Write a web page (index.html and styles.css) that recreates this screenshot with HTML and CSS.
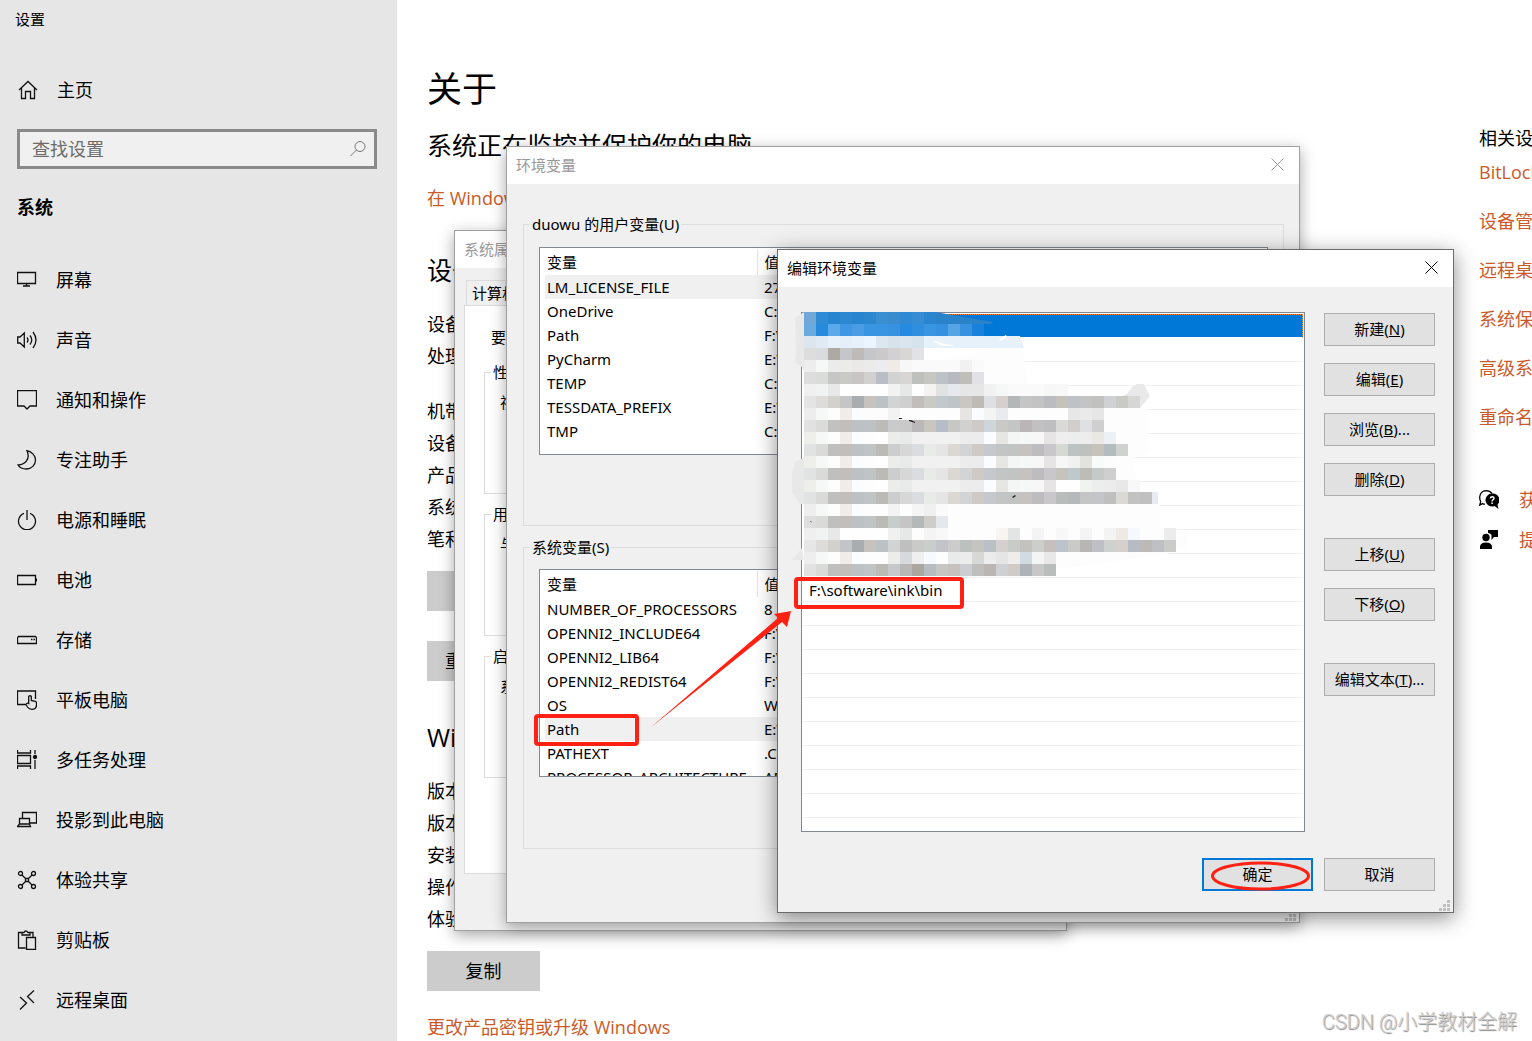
FILE: index.html
```html
<!DOCTYPE html>
<html lang="zh-CN">
<head>
  <meta charset="UTF-8">
  <meta name="viewport" content="width=device-width, initial-scale=1.0">
  <title>设置</title>
  <link rel="stylesheet" href="styles.css">
</head>
<body>
  <div class="settings">
    <aside class="sidebar">
      <div class="app-title">设置</div>
      <a class="home" href="#">
        <svg class="icon" viewBox="0 0 20 20"><path d="M1 10 10 1.5 19 10M3.500 8v10.500h4v-7h5v7h4V8"/></svg>
        主页
      </a>
      <div class="search">
        <input type="text" placeholder="查找设置" aria-label="查找设置">
        <svg class="search-icon" viewBox="0 0 16 16"><circle cx="10" cy="5.500" r="5"/><path d="M6.500 9 .5 15"/></svg>
      </div>
      <h2>系统</h2>
      <nav>
        <a href="#"><svg class="icon" viewBox="0 0 20 20"><path d="M.5 2.500h18v11H.5zM9.500 13.500V16M6 16h7"/></svg>屏幕</a>
        <a href="#"><svg class="icon" viewBox="0 0 20 20"><path d="M.7 7v6H3l4.300 4V3L3 7zM10 7.500q2 2.500 0 5M13 5.500q3.500 4.500 0 9M16 2q6 8 0 16"/></svg>声音</a>
        <a href="#"><svg class="icon" viewBox="0 0 20 20"><path d="M.5.500h19v15.500h-6.500L10 19l-3-3H.5z"/></svg>通知和操作</a>
        <a href="#"><svg class="icon" viewBox="0 0 20 20"><path d="M10 .7c5 1 8.500 5 8.500 9.300 0 5-4 9-9 9-4 0-7-1.500-8.500-4C8.500 14.500 13.500 8.500 10 .7z"/></svg>专注助手</a>
        <a href="#"><svg class="icon" viewBox="0 0 20 20"><path d="M10 0v10M7 3.300a8.500 8.500 0 1 0 6 0"/></svg>电源和睡眠</a>
        <a href="#"><svg class="icon" viewBox="0 0 20 20"><path d="M.5 5.500h18v9H.5zM19.500 8.500v3"/></svg>电池</a>
        <a href="#"><svg class="icon" viewBox="0 0 20 20"><path d="M1.500 6.500h17l1 1.500v5.500H.5V8zM14 9.500h1.500M16.500 9.500H18"/></svg>存储</a>
        <a href="#"><svg class="icon" viewBox="0 0 20 20"><path d="M9 14.500H.5V1h18v8M11.700 13.500V6.500q1.300-1.800 2.600 0v4l4 .8q1.200.3 1.200 1.700v2q0 4.300-4.500 4.300-3 0-4.500-2.300L9 14.500q1-2 2.700-1z"/></svg>平板电脑</a>
        <a href="#"><svg class="icon" viewBox="0 0 20 20"><path d="M.5 0v3h13V0M.5 5.500h13v8H.5zM.5 19v-3h13v3M18 0v4M18 10v9"/><circle class="solid" cx="18" cy="7" r="1.500"/></svg>多任务处理</a>
        <a href="#"><svg class="icon" viewBox="0 0 20 20"><path d="M5.500 8V2.500h14v10.500h-6.500M2.500 14V8.500h10V14M2.500 14 .5 16.500h13L12.500 14z"/></svg>投影到此电脑</a>
        <a href="#"><svg class="icon" viewBox="0 0 20 20"><path d="m5 5 3.500 3.500M15 5l-3.500 3.500M5 15l3.500-3.500M15 15l-3.500-3.500M8.500 8.500h3v3h-3z"/><circle cx="3.500" cy="3.500" r="2"/><circle cx="16.500" cy="3.500" r="2"/><circle cx="3.500" cy="16.500" r="2"/><circle cx="16.500" cy="16.500" r="2"/></svg>体验共享</a>
        <a href="#"><svg class="icon" viewBox="0 0 20 20"><path d="M8.500 18H1.500V2.500H5M13 2.500h3V7M5 5V2.500h2Q8.500-.5 11 2.500h2V5zM9.500 7.500h9v12h-9z"/></svg>剪贴板</a>
        <a href="#"><svg class="icon" viewBox="0 0 20 20"><path d="m3 7 6.500 6L3 19.500M17 .5l-6.500 6 6.500 6.500"/></svg>远程桌面</a>
      </nav>
    </aside>

    <main class="about">
      <h1>关于</h1>
      <p class="status">系统正在监控并保护你的电脑。</p>
      <a class="link security-link" href="#">在 Windows 安全中心中查看详细信息</a>
      <h2>设备规格</h2>
      <ul class="specs">
        <li>设备名称</li>
        <li>处理器</li>
      </ul>
      <ul class="specs more">
        <li>机带 RAM</li>
        <li>设备 ID</li>
        <li>产品 ID</li>
        <li>系统类型</li>
        <li>笔和触控</li>
      </ul>
      <button class="flat">复制</button>
      <button class="flat rename">重命名这台电脑</button>
      <h2>Windows 规格</h2>
      <ul class="specs">
        <li>版本</li>
        <li>版本号</li>
        <li>安装日期</li>
        <li>操作系统</li>
        <li>体验</li>
      </ul>
      <button class="flat">复制</button>
      <a class="link upgrade-link" href="#">更改产品密钥或升级 Windows</a>
    </main>

    <aside class="related">
      <h3>相关设置</h3>
      <a class="link" href="#">BitLocker 设置</a>
      <a class="link" href="#">设备管理器</a>
      <a class="link" href="#">远程桌面</a>
      <a class="link" href="#">系统保护</a>
      <a class="link" href="#">高级系统设置</a>
      <a class="link" href="#">重命名这台电脑</a>
      <div class="help">
        <a class="link" href="#"><svg viewBox="0 0 20 20"><path class="outline" d="M6 14.200q-1.500 0-2.500-.6L.8 15l.9-3.500Q.6 9.500.7 7 1.500 1 7 .7q4 0 6 2.800"/><path d="M13 3.500a6.500 6.500 0 1 0 2.500 12.500l4 3-1-4.500A6.500 6.500 0 0 0 13 3.500z"/><path class="question" d="M11.300 8.300q.2-1.500 1.900-1.500 1.800 0 1.800 1.500 0 1-1.100 1.600-.8.500-.8 1.500M13.100 12.500V14"/></svg>获取帮助</a>
        <a class="link" href="#"><svg viewBox="0 0 20 20"><circle cx="7" cy="7.500" r="3.700"/><path d="M1 19v-2q0-4.500 6-4.500t6 4.500v2zM9 0h10v7h-4l-2.500 3V5Q11 3 9 3z"/></svg>提供反馈</a>
      </div>
    </aside>
  </div>

  <section class="window properties">
    <header class="titlebar"><span>系统属性</span></header>
    <div class="tab">计算机名</div>
    <div class="panel">
      <p>要进行大多数更改</p>
      <fieldset>
        <legend>性能</legend>
        <p>视觉效果</p>
      </fieldset>
      <fieldset>
        <legend>用户配置文件</legend>
        <p>与登录帐户相关</p>
      </fieldset>
      <fieldset>
        <legend>启动和故障恢复</legend>
        <p>系统启动</p>
      </fieldset>
    </div>
  </section>

  <section class="window variables">
    <header class="titlebar">
      <span>环境变量</span>
      <button class="close" aria-label="关闭"><svg viewBox="0 0 13 13"><path d="m.5.500 12 12M12.500.500l-12 12"/></svg></button>
    </header>
    <div class="variables-body">
      <fieldset>
        <legend>duowu 的用户变量(U)</legend>
        <div class="table-box">
          <table>
            <thead><tr><th>变量</th><th>值</th></tr></thead>
            <tbody>
              <tr class="selected"><td>LM_LICENSE_FILE</td><td>27</td></tr>
              <tr><td>OneDrive</td><td>C:\</td></tr>
              <tr><td>Path</td><td>F:\</td></tr>
              <tr><td>PyCharm</td><td>E:\</td></tr>
              <tr><td>TEMP</td><td>C:\</td></tr>
              <tr><td>TESSDATA_PREFIX</td><td>E:\</td></tr>
              <tr><td>TMP</td><td>C:\</td></tr>
            </tbody>
          </table>
        </div>
      </fieldset>
      <fieldset>
        <legend>系统变量(S)</legend>
        <div class="table-box">
          <table>
            <thead><tr><th>变量</th><th>值</th></tr></thead>
            <tbody>
              <tr><td>NUMBER_OF_PROCESSORS</td><td>8</td></tr>
              <tr><td>OPENNI2_INCLUDE64</td><td>F:\</td></tr>
              <tr><td>OPENNI2_LIB64</td><td>F:\</td></tr>
              <tr><td>OPENNI2_REDIST64</td><td>F:\</td></tr>
              <tr><td>OS</td><td>Windows_NT</td></tr>
              <tr class="selected"><td>Path</td><td>E:\</td></tr>
              <tr><td>PATHEXT</td><td>.COM</td></tr>
              <tr><td>PROCESSOR_ARCHITECTURE</td><td>AMD64</td></tr>
            </tbody>
          </table>
        </div>
      </fieldset>
    </div>
    <svg class="grip" viewBox="0 0 11 11"><path d="M8 0h3v3H8zM4 4h3v3H4zM8 4h3v3H8zM0 8h3v3H0zM4 8h3v3H4zM8 8h3v3H8z"/></svg>
  </section>

  <section class="window edit">
    <header class="titlebar">
      <span>编辑环境变量</span>
      <button class="close" aria-label="关闭"><svg viewBox="0 0 13 13"><path d="m.5.500 12 12M12.500.500l-12 12"/></svg></button>
    </header>
    <div class="edit-body">
      <div class="path-box">
        <ul class="paths">
          <li class="current"></li>
          <li></li><li></li><li></li><li></li><li></li><li></li><li></li><li></li><li></li><li></li>
          <li>F:\software\ink\bin</li>
          <li></li><li></li><li></li><li></li><li></li><li></li><li></li><li></li><li></li>
        </ul>
        <svg class="mosaic" id="mosaic"></svg>
      </div>
      <div class="actions">
        <button>新建(<u>N</u>)</button>
        <button>编辑(<u>E</u>)</button>
        <button>浏览(<u>B</u>)...</button>
        <button>删除(<u>D</u>)</button>
        <button class="spaced">上移(<u>U</u>)</button>
        <button>下移(<u>O</u>)</button>
        <button class="spaced">编辑文本(<u>T</u>)...</button>
      </div>
    </div>
    <footer class="edit-footer">
      <button class="default">确定</button>
      <button>取消</button>
    </footer>
    <svg class="grip" viewBox="0 0 11 11"><path d="M8 0h3v3H8zM4 4h3v3H4zM8 4h3v3H8zM0 8h3v3H0zM4 8h3v3H4zM8 8h3v3H8z"/></svg>
  </section>

  <svg class="marks">
    <rect x="536" y="716" width="101" height="28" rx="2"/>
    <rect x="796" y="579" width="166" height="28" rx="2"/>
    <ellipse cx="1260.500" cy="876" rx="48" ry="13"/>
    <path d="M650 728 778 618 774 614 791 611 787 627 782 622z"/>
  </svg>
  <div class="watermark">CSDN @小学教材全解</div>

  <script src="script.js"></script>
</body>
</html>
```

FILE: styles.css
```css
:root {
  --accent: #ca5a2a;
  --face: #f0f0f0;
  --line: #dcdcdc;
  --mark: #ff2114;
}

* {
  box-sizing: border-box;
}

body {
  margin: 0;
  height: 100vh;
  overflow: hidden;
  position: relative;
  font-family: "Open Sans", "Noto Sans CJK SC", sans-serif;
  font-size: 15px;
  line-height: 20px;
  color: #000;
  background: #fff;
}

h1, h2, h3, p, ul {
  margin: 0;
  padding: 0;
  font-weight: normal;
}

ul {
  list-style: none;
}

a {
  color: inherit;
  text-decoration: none;
}

button, input {
  font: inherit;
  color: inherit;
}

/* settings page */
.settings {
  display: flex;
  height: 100%;
  font-size: 18px;
  line-height: 32px;
  white-space: nowrap;
}

.sidebar {
  flex: 0 0 397px;
  background: #e6e6e6;
}

.app-title {
  padding: 9px 15px;
  font-size: 15px;
  line-height: 20px;
}

.home {
  display: flex;
  align-items: center;
  gap: 19px;
  height: 60px;
  margin-top: 22px;
  padding-left: 18px;
}

.icon {
  width: 20px;
  height: 20px;
  fill: none;
  stroke: #111;
  stroke-width: 1.3;
}

.icon .solid {
  fill: #111;
}

.search {
  display: flex;
  align-items: center;
  height: 40px;
  margin: 9px 20px 0 17px;
  padding: 0 8px 0 12px;
  border: 3px solid #8a8a8a;
  background: var(--face);
}

.search input {
  flex: 1;
  min-width: 0;
  padding: 0;
  border: 0;
  outline: 0;
  background: none;
}

.search input::placeholder {
  color: #6b6b6b;
  opacity: 1;
}

.search-icon {
  width: 16px;
  height: 16px;
  fill: none;
  stroke: #777;
}

.sidebar h2 {
  margin: 22px 0 27px 17px;
  font-size: 18px;
  font-weight: bold;
}

.sidebar nav a {
  display: flex;
  align-items: center;
  gap: 19px;
  height: 60px;
  padding-left: 17px;
}

.about {
  flex: 1;
  min-width: 0;
  display: flex;
  flex-direction: column;
  align-items: flex-start;
  padding: 64px 0 0 30px;
}

.about > * {
  flex: none;
}

.about h1 {
  font-size: 35px;
  line-height: 50px;
}

.status {
  margin-top: 15px;
  font-size: 25px;
}

.link {
  color: var(--accent);
}

.security-link {
  margin-top: 21px;
}

.about h2 {
  margin: 38px 0 20px;
  font-size: 25px;
  line-height: 36px;
}

.specs.more {
  margin-top: 23px;
}

.flat {
  width: 113px;
  height: 40px;
  margin-top: 16px;
  border: 0;
  background: #ccc;
}

.rename {
  width: 162px;
  margin-top: 30px;
}

.upgrade-link {
  margin-top: 20px;
}

.related {
  flex: 0 0 53px;
  min-width: 0;
  padding-top: 122px;
  overflow: hidden;
}

.related h3 {
  font-size: 18px;
}

.related > .link {
  display: block;
  margin: 2px 0 17px;
}

.related > .link + .link {
  margin-top: 17px;
}

.help {
  margin-top: 47px;
}

.help .link {
  display: flex;
  align-items: center;
  gap: 20px;
  height: 40px;
}

.help svg {
  flex: none;
  width: 20px;
  height: 20px;
  fill: #000;
}

.help .outline {
  fill: none;
  stroke: #000;
  stroke-width: 1.3;
}

.help .question {
  fill: none;
  stroke: #fff;
  stroke-width: 1.5;
}

/* windows */
.window {
  position: absolute;
  border: 1px solid #a0a0a0;
  background: var(--face);
  box-shadow: 0 4px 14px rgba(0, 0, 0, 0.35);
  font-family: "Noto Sans", "Noto Sans CJK SC", sans-serif;
  white-space: nowrap;
}

.titlebar {
  display: flex;
  align-items: center;
  justify-content: space-between;
  height: 37px;
  padding: 0 15px 2px 9px;
  background: #fff;
  color: #999;
}

.close {
  display: flex;
  padding: 0;
  border: 0;
  background: none;
}

.close svg {
  width: 13px;
  height: 13px;
  fill: none;
  stroke: currentColor;
}

.window fieldset {
  min-width: 0;
  margin: 0;
  padding: 13px 15px 70px;
  border: 1px solid var(--line);
}

.window legend {
  margin-left: -9px;
  padding: 0 2px;
}

.grip {
  position: absolute;
  right: 3px;
  bottom: 1px;
  width: 11px;
  height: 11px;
  fill: #bfbfbf;
}

.properties {
  left: 454px;
  top: 230px;
  width: 613px;
  padding-bottom: 56px;
}

.tab {
  width: 84px;
  height: 25px;
  margin: 12px 0 0 11px;
  padding: 2px 5px;
  border: 1px solid var(--line);
  border-bottom: 0;
}

.panel {
  margin: 0 9px;
  padding: 21px 19px 95px;
  border: 1px solid var(--line);
  background: #fff;
}

.panel > p {
  padding: 0 7px 15px;
}

.window.properties fieldset {
  padding: 10px 15px 81px;
}

.properties fieldset + fieldset {
  margin-top: 10px;
}

.variables {
  left: 506px;
  top: 146px;
  width: 794px;
}

.variables-body {
  padding: 30px 15px 73px 16px;
}

.variables fieldset + fieldset {
  margin-top: 11px;
  padding: 12px 15px 71px;
}

.table-box {
  height: 208px;
  padding: 1px 5px;
  border: 1px solid #828790;
  overflow: hidden;
  background: #fff;
}

table {
  width: 100%;
  border-collapse: collapse;
  table-layout: fixed;
}

th, td {
  height: 24px;
  padding: 0 0 0 7px;
  font-weight: normal;
  text-align: left;
}

th {
  height: 26px;
}

th:first-child, td:first-child {
  width: 212px;
  padding-left: 2px;
}

th:first-child {
  border-right: 1px solid #e5e5e5;
}

tr.selected {
  background: var(--face);
}

.edit {
  left: 777px;
  top: 249px;
  width: 677px;
  border-color: #6b6b6b;
  box-shadow: 0 5px 20px rgba(0, 0, 0, 0.45);
}

.edit .titlebar {
  color: #000;
}

.edit-body {
  display: flex;
  gap: 19px;
  padding: 25px 18px 0 23px;
}

.path-box {
  position: relative;
  flex: 1;
  padding: 1px 1px 13px;
  border: 1px solid #828790;
  background: #fff;
}

.paths li {
  height: 24px;
  padding-left: 6px;
  border-bottom: 1px solid var(--face);
  line-height: 24px;
}

.paths .current {
  border: 1px dotted #ff8728;
  border-bottom: 1px solid #fff;
  background: #0078d7;
}

.mosaic {
  position: absolute;
  left: -10px;
  top: -1px;
  width: 400px;
  height: 267px;
}

.actions {
  display: flex;
  flex-direction: column;
  gap: 17px;
  padding-top: 1px;
}

.actions button, .edit-footer button {
  width: 111px;
  height: 33px;
  padding: 0 0 2px;
  border: 1px solid #adadad;
  background: #e1e1e1;
}

.actions u {
  text-decoration-thickness: 1px;
}

.actions .spaced {
  margin-top: 25px;
}

.edit-footer {
  display: flex;
  justify-content: flex-end;
  gap: 11px;
  padding: 26px 18px 21px;
}

.edit-footer .default {
  border: 2px solid #0078d7;
}

/* red marks over the windows */
.marks {
  position: absolute;
  left: 0;
  top: 0;
  width: 100%;
  height: 100%;
  pointer-events: none;
  fill: none;
  stroke: var(--mark);
  stroke-width: 4;
}

.marks ellipse {
  stroke-width: 3;
}

.marks path {
  fill: var(--mark);
  stroke: none;
}

.watermark {
  position: absolute;
  right: 15px;
  bottom: 4px;
  font-family: Roboto, "Noto Sans CJK SC", sans-serif;
  font-size: 20px;
  font-weight: 300;
  line-height: 30px;
  color: #ccc;
  text-shadow: 1px 1px 1px #888;
}
```

FILE: script.js
```js
// pixelated cover over the private path entries, 12px cells
const CELL = 12;
const LEFT = 12;

const dark = "e1e2e2 dadbd8 bfbfbf c2bebb bdc1c4 c1c4c5 bcbab5 cccdcf d7d7d7 dbdcdf e8ebe8 e5e5e5 dbd8d4 d2d4d6 cfcac6 c5c9cd c3c5c5 c2c4c3 c5c2bf bdbdbf cac7ca";
const light = "eeeeeb f5f8f6 fdfdfd efecea fafcff fdfdfd fefefe ececea e9eaea f1f1f1 f1f1f1 f1f1f1 f1f1f1 ececec ececec fafcff e6e6e3 f4f6f6 f6f8f8 f7f7f7 e6e4e4";

const rows = [
  "72a8d8 2f8bd3 2785cf 2d88d2 2785cf 2c87cf 3a8fd3 3a8ccf 3089d3 378dd3 2a85cf",
  "6aabdf 268bdd 5aa9ea 3f96e2 4a9de4 3994e2 3994e2 3792e0 268be0 2f8ee0 3994e2 3590df 54a4e6 3793e0 1881dc",
  "dde6ee dfeaf4 e6f1fb e4eff9 e6f1fb ebf5ff dce7f0 d8e2eb dae5ee d6e2ec e6f1fa e6f1fa e6f1fa e6f1fa e6f1fa e6f1fa e6f1fa",
  "dddddd dadbdd adaaa3 c5c6ca bdbab7 c4c6ca cbc9ca d2d0d2 d8d7d5 e1e2e5",
  "ededed f5f8f7 ebebeb ebebea eae9e7 ebebea ebecef f1ebe7 f7f7f7 fafafa fafafa fafafa fafafa f1f1f1 fafafa",
  "dddddd dadcda c6c6c6 c9c9c5 cac5c5 d2d1cf babdc6 d1d3d2 d7d6d4 bdc0bd c8c6c0 bdc2c8 b9b9c1 c0beb9 e1e1e6",
  "f0f0f0 f0f3f1 e8e8e8 fefefe fefefe fefefe fefefe f2f2f2 e6e8e7 fefefe f4f3f1 e0e3e2 e6e9ed e6e6e6 e6e6e6 f1f1f1 f6f8f7 fafafa fafafa fafafa f7f7f7 f8f8f8",
  "e4e4e5 dedcda d3d1cc c5c5c5 a9adb0 c7c2bd bcc1c4 d2d4d4 cecfce c2bdba cbc9c3 c3c8cc bfc4c6 cac6c2 bebbb7 dedfe2 d5cfcd b3b7b8 c5c5c5 c3c3c3 bbbcc0 c5c1bb bfc1c8 c4c4c4 c1c1bf d0d1d4 c9cac6 d6d6d7",
  "ededed f5f8f6 fdfdfd efecea fafcff fcfcfd fcfcfc f2f2f2 fdfdfd fdfdfd fdfdfd fdfdfd fdfdfd e6e5e3 fafcff f4f4f2 e9ebee fdfdfd fdfdfd fdfdfd fdfdfd fdfdfd e8e7e7 ebeaea e6e6e6",
  "e1e1e1 dbdcda c1c1c1 c2bebc bdc1c4 bfc2c5 bdbbb7 c9cacb c9c9c9 bab8b8 c9c5bf b6bdc7 c7c7c5 d1d1d0 cdcac7 cfd6db c9c9c7 c3c6c5 bab6b8 c1c1c1 bebec0 d9dad8 d1cecb dfe0e4 cecfce",
  light + " eeeeef eceeed ededed eae8e2 ecf1f6",
  dark + " d6d8d4 bdc3c3 bfc1bf c6c3bd b5bcc1 cfd2ce",
  light + " f7f7f7 f1f1f1 e2e2df f7fbf9 fcfcfc",
  dark + " c6c3bd bfc8cb bebcb6 c5c9c7 cfcfcf",
  light + " fefefe fefefe f1f3f1 eceeee ececec e8e8e8 f8f8f8",
  dark + " b8bcba b5b9b9 c5c5c5 c4c5c8 bfbfbf dad9d5 c2c2c2 c0c0c0",
  "eeeeee f5f8f6 fdfdfd efecea fafcff fdfdfd fdfdfd f3f3f3 fdfdfd f5f5f5 f0f0f0 fafafa",
  "dedede dadbd8 bfbfbf c2bebb bdc1c4 c1c4c5 bcbab5 c7cccc c5c5c5 b4b8b9 cfcdca e4e7eb",
  "efefef f0f3f1 e8e8e8 fefefe fefefe fefefe fefefe f0f0f0 e6e8e7 fdfdfd f4f4f4 f8f8f8 fdfdfd fdfdfd fdfdfd fdfdfd f7f4f2 e3e5e4 fdfdfd f4f4f4 fdfdfd f7f7f7 fdfdfd f4f4f4 fdfdfd f3f3f3 efe9e5 f5f9fd fdfdfd fdfdfd ececec",
  "e6e6e6 dedcda d3d1cc c3c4c8 a9adb0 c7c2bd bcc1c4 d2d4d4 bfbfbf cacac8 c9cdcc c3c4c9 cccccc bcc0be c6c4c0 bbc0c6 d5cfd0 c8cbc8 c4c2be cccecc c5c0bd bdc3cb cacbc8 b8b6b4 bec0c5 cfd1cf d5d0cc b7bcc4 bcbab6 bfc0c3 cbccca",
  "eeeeee f5f8f6 fdfdfd efecea fafcff fdfdfd fdfdfd ececea d6dadd efefef f6faff fdfdfd e8ebe9 ececec d7d7d5 ececec e5e5e5 efece9 d2dbe2 f4f4f4 e8e8e8",
  "e2e2e2 dadbd8 bfbfbf c2bebb bdc1c4 c1c4c5 bcbab5 c7c8cb b8b8b6 aba7a0 b6bcc2 c6c6c4 c6c1be cccdd1 bfbfbd b9b6b3 ced0d4 d0cbc7 adb3b8 c7c7c9 b9bdbc"
];

function add(tag, attrs) {
  const el = document.createElementNS("http://www.w3.org/2000/svg", tag);
  for (const key in attrs) el.setAttribute(key, attrs[key]);
  document.getElementById("mosaic").appendChild(el);
}

function shape(points, fill) {
  add("polygon", { points, fill });
}

// smudged edges under the cells
shape("12,36 230,36 236,72 340,92 356,98 356,142 341,145 346,180 368,190 368,214 395,220 395,234 374,242 270,257 240,265 12,265", "#fdfdfd");
shape("10,36 200,36 150,48 10,56", "#fff");
shape("3,6 12,0 12,60 10,55 3,50 4,40", "#e8e8e8");
shape("4,149 12,146 12,192 8,192 0,180 0,160", "#e8e8e8");
shape("0,248 10,236 12,248", "#e8e8e8");
shape("144,0 144,12 199,12 201,10 160,3", "#2a82c8");
shape("216,24 228,24 232,36 216,36", "#e6f1fa");
shape("288,86 300,90 318,89 335,82 340,75 345,72 352,72 358,84 348,96 288,96", "#e8e9e8");

rows.forEach((row, y) => {
  row.split(" ").forEach((color, x) => {
    add("rect", { x: LEFT + x * CELL, y: y * CELL, width: CELL, height: CELL, fill: "#" + color });
  });
});

add("rect", { x: 360, y: 180, width: 6, height: CELL, fill: "#e7eaee" });
shape("141,29 145,29 149,31 163,34 150,34", "#fff");
shape("207,27 214,23 215,25 209,29", "#fff");
shape("107,106 110,106 110,107 107,107", "#222");
shape("117,108 119,108 123,110 123,111 117,109", "#222");
shape("220,185 223,183 224,184 221,186", "#222");
shape("18,209 19,209 20,211", "#222");
```
